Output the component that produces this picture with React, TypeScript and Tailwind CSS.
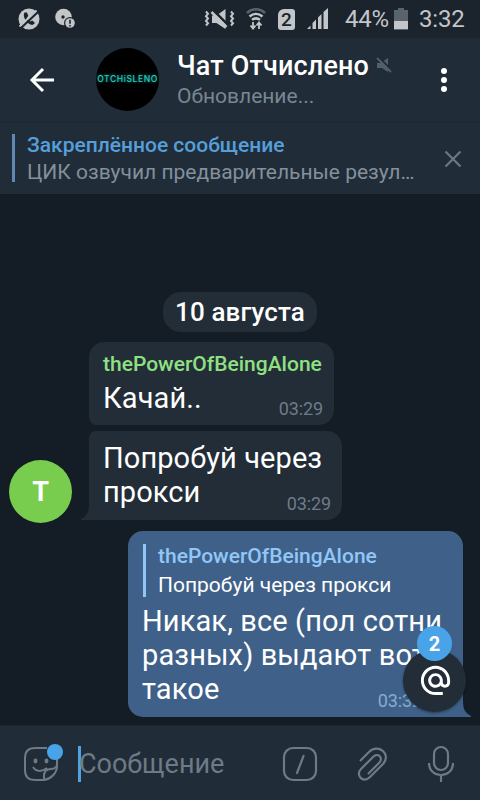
import type { ReactNode } from "react";

// --- STATUS BAR ---

function StatusBar() {
    return (
        <div className="flex h-[38px] shrink-0 items-center bg-[#1b242d] text-[#c3c6c9]">
            <svg className="ml-[18px] h-[22px] w-[22px]" viewBox="0 0 22 22">
                <circle cx="11" cy="11" r="10.5" fill="#c3c6c9" />
                <path d="M6.500 4.500C4 8 8.500 16.500 14.500 17l2.500-2-2.700-2.400-2 .9C10.500 12.500 9.500 11 9 9.500l1.300-1.600L9 4.500z" fill="#1b242d" />
                <path d="M1.500 18.500 18.500 2.500" stroke="#c3c6c9" strokeWidth="2" />
                <path d="M3 20 20 4" stroke="#1b242d" strokeWidth="2" />
            </svg>
            <svg className="ml-[14px] h-[22px] w-[22px]" viewBox="0 0 22 22">
                <circle cx="9.500" cy="9" r="8.300" fill="#c3c6c9" />
                <circle cx="9" cy="9" r="1.700" fill="#1b242d" />
                <circle cx="16" cy="15" r="6" fill="#1b242d" />
                <circle cx="16" cy="15" r="4.800" fill="#c3c6c9" />
                <path d="M16 11.800v4M16 17v1.600" stroke="#1b242d" strokeWidth="1.600" />
            </svg>

            <svg className="ml-[127px] h-[22px] w-[32px]" viewBox="0 0 32 22" fill="none">
                <path d="M9 7.500h4.500L22.500 1v20l-9-6H9z" fill="#c3c6c9" />
                <path d="m10.500 2.500 14 14" stroke="#1b242d" strokeWidth="2.500" />
                <path d="m8.500 4 15 15" stroke="#c3c6c9" strokeWidth="2.500" />
                <path d="m3 3.500 2 2.300-2 2.400 2 2.300-2 2.400 2 2.300-2 2.300M28 3.500l2 2.300-2 2.400 2 2.300-2 2.400 2 2.300-2 2.300" stroke="#c3c6c9" strokeWidth="2" />
            </svg>
            <svg className="ml-[10px] h-[24px] w-[22px]" viewBox="0 0 22 24" fill="none">
                <path d="M2 6c5-5 13-5 18 0" stroke="#59636b" strokeWidth="2.500" />
                <path d="M4.500 9.500c4-3.500 9-3.500 13 0M7 12.700c3-2 5-2 8 0" stroke="#c3c6c9" strokeWidth="2.500" />
                <path d="M8 15v6M5.500 18.500 8 21.500l2.500-3M14 22v-6M11.500 18.500 14 15.500l2.500 3" stroke="#c3c6c9" strokeWidth="1.800" />
            </svg>
            <div className="ml-[11px] flex h-[21px] w-[17px] items-center justify-center rounded-[3px] rounded-tl-[6px] bg-[#c3c6c9] text-[19px] leading-none font-medium text-[#1b242d]">2</div>
            <svg className="ml-[12px] h-[22px] w-[22px]" viewBox="0 0 22 22" fill="#c3c6c9">
                <path d="M0 21l3.500-3.500V21zM5.500 21v-6L9 11.500V21zM11 21V9.500L14.500 6v15zM16.500 21V4L21 0v21z" />
            </svg>
            <span className="ml-[16px] w-[46px] text-[24px] leading-none tracking-[-0.3px]">44%</span>
            <svg className="ml-[3px] h-[22px] w-[14px]" viewBox="0 0 14 22">
                <path d="M4 0h6v2h4v20H0V2h4z" fill="#59636b" />
                <path d="M0 13h14v8H0z" fill="#c3c6c9" />
            </svg>
            <span className="ml-[11px] text-[24px] leading-none tracking-[-0.2px]">3:32</span>
        </div>
    );
}

// --- HEADER ---

function ChatHeader() {
    return (
        <header className="flex h-[84px] shrink-0 items-center bg-[#202c38]">
            <svg className="ml-[29px] h-[26px] w-[26px]" viewBox="0 0 26 26" fill="none" stroke="#fff" strokeWidth="3">
                <path d="M25 13H3M14 2 3 13l11 11" />
            </svg>
            <div className="mt-[-2px] ml-[41px] flex h-[63px] w-[63px] items-center justify-center rounded-full bg-black">
                <span className="font-['Inter'] text-[8.5px] leading-none font-medium tracking-[0.6px] whitespace-nowrap text-[#27c9bf] [text-shadow:0_0_3px_#0b918b]">OTCHiSLENO</span>
            </div>
            <div className="mt-[-1px] ml-[18px] flex-1">
                <div className="flex items-center">
                    <h1 className="text-[27px] leading-[30px] font-medium tracking-[0.15px] whitespace-nowrap text-white">Чат Отчислено</h1>
                    <svg className="ml-[7px] h-[17px] w-[16px]" viewBox="0 0 16 17">
                        <path d="M1 6h3.500L12 1v14l-6-4H1z" fill="#52606c" />
                        <path d="m2.500 0 13 13" stroke="#202c38" strokeWidth="2" />
                        <path d="m1 1 14 14" stroke="#52606c" strokeWidth="1.800" />
                    </svg>
                </div>
                <p className="mt-[2px] text-[21px] leading-[26px] text-[#798793]">Обновление...</p>
            </div>
            <div className="mr-[33px] flex flex-col gap-[3px]">
                <span className="h-[6px] w-[6px] rounded-full bg-white" />
                <span className="h-[6px] w-[6px] rounded-full bg-white" />
                <span className="h-[6px] w-[6px] rounded-full bg-white" />
            </div>
        </header>
    );
}

function PinnedMessage() {
    return (
        <div className="flex h-[72px] shrink-0 items-start border-t border-[#1c2732] bg-[#202c38] pt-[11px] pl-[12px]">
            <div className="h-[48px] w-[3px] bg-[#5d88b2]" />
            <div className="mt-[-1px] ml-[12px] w-[400px] whitespace-nowrap">
                <p className="text-[21px] leading-[24px] font-medium text-[#559fdb]">Закреплённое сообщение</p>
                <p className="mt-[2px] text-[21px] leading-[26px] text-[#84909b]">ЦИК озвучил предварительные резул…</p>
            </div>
            <svg className="mt-[16px] ml-[17px] h-[18px] w-[18px]" viewBox="0 0 18 18" stroke="#6b7782" strokeWidth="2.200">
                <path d="m1.500 1.500 15 15M16.500 1.500l-15 15" />
            </svg>
        </div>
    );
}

// --- MESSAGES ---

function Time({ children, className }: { children: ReactNode; className: string }) {
    return <span className={`absolute text-[18px] leading-[20px] tracking-[-0.1px] ${className}`}>{children}</span>;
}

function MessageList() {
    return (
        <main className="flex flex-1 flex-col bg-[#141d25] pt-[98px]">
            <div className="ml-[163px] flex h-[40px] w-[154px] items-center justify-center rounded-[18px] bg-[#222d38] pt-px text-[26px] font-medium tracking-[0.15px] whitespace-nowrap text-white">
                10 августа
            </div>

            <div className="relative mt-[10px] ml-[89px] h-[83px] w-[245px] rounded-[15px] rounded-bl-[8px] bg-[#222d38] pt-[9px] pl-[14px] whitespace-nowrap">
                <p className="text-[21px] leading-[26px] font-medium text-[#8fe082]">thePowerOfBeingAlone</p>
                <p className="mt-[4px] text-[29px] leading-[34px] tracking-[0.12px] text-white">Качай..</p>
                <Time className="right-[11px] bottom-[6px] text-[#6f7b87]">03:29</Time>
            </div>

            <div className="mt-[6px] flex items-end">
                <div className="mb-[-3px] ml-[9px] flex h-[63px] w-[63px] items-center justify-center rounded-full bg-[#78cc4e] pt-px text-[27px] font-bold text-white">T</div>
                <div className="relative ml-[17px] h-[89px] w-[253px] rounded-[15px] rounded-tl-[7px] rounded-bl-none bg-[#222d38] pt-[10px] pl-[14px] text-[29px] leading-[34px] tracking-[0.08px] whitespace-nowrap text-white">
                    <svg className="absolute bottom-0 left-[-8px] h-[16px] w-[9px]" viewBox="0 0 9 16" fill="#222d38">
                        <path d="M9 0H8c0 8-2 12-8 15v1h9z" />
                    </svg>
                    <p>Попробуй через<br />прокси</p>
                    <Time className="right-[11px] bottom-[6px] text-[#6f7b87]">03:29</Time>
                </div>
            </div>

            <div className="relative mt-[11px] ml-[128px] h-[186px] w-[335px] rounded-[15px] rounded-br-none bg-[#3f6189] pt-[13px] pl-[14px] whitespace-nowrap">
                <svg className="absolute right-[-8px] bottom-0 h-[16px] w-[9px]" viewBox="0 0 9 16" fill="#3f6189">
                    <path d="M0 0h1c0 8 2 12 8 15v1H0z" />
                </svg>
                <div className="flex h-[53px]">
                    <div className="ml-px h-full w-[3px] bg-[#90c7f8]" />
                    <div className="ml-[12px]">
                        <p className="text-[21px] leading-[24px] font-medium text-[#90c7f8]">thePowerOfBeingAlone</p>
                        <p className="mt-[4px] text-[21px] leading-[26px] text-white">Попробуй через прокси</p>
                    </div>
                </div>
                <p className="mt-[7px] text-[29px] leading-[34px] tracking-[0.12px] text-white">
                    Никак, все (пол сотни<br />разных) выдают вот<br />такое
                </p>
                <Time className="right-[41px] bottom-[6px] text-[#85acd2]">03:32</Time>

                {/* Jump to mentions */}
                <div className="absolute top-[118px] left-[275px] flex h-[63px] w-[63px] items-center justify-center rounded-full bg-[#222d38] shadow-[0_1px_3px_#0006]">
                    <svg className="ml-[2px] h-[35px] w-[35px]" viewBox="0 0 24 24" fill="#fff">
                        <path d="M12 1.950c-5.520 0-10 4.480-10 10s4.480 10 10 10h5v-2h-5c-4.340 0-8-3.660-8-8s3.660-8 8-8 8 3.660 8 8v1.430c0 .79-.71 1.570-1.500 1.570s-1.500-.78-1.500-1.570v-1.430c0-2.760-2.240-5-5-5s-5 2.240-5 5 2.240 5 5 5c1.380 0 2.640-.56 3.540-1.470.65.890 1.770 1.470 2.960 1.470 1.970 0 3.500-1.600 3.500-3.570v-1.430c0-5.520-4.480-10-10-10zm0 13c-1.660 0-3-1.340-3-3s1.340-3 3-3 3 1.340 3 3-1.340 3-3 3z" />
                    </svg>
                    <span className="absolute top-[-23px] left-[14px] flex h-[35px] w-[35px] items-center justify-center rounded-full bg-[#48a3e9] pt-px text-[20px] font-bold text-white">2</span>
                </div>
            </div>
        </main>
    );
}

// --- INPUT ---

function MessageInput() {
    return (
        <footer className="flex h-[75px] shrink-0 items-center border-t border-[#1c2833] bg-[#202c38] pt-[2px] text-[#6e7a86]">
            <svg className="ml-[22px] h-[40px] w-[42px]" viewBox="0 0 42 40" fill="none" stroke="currentColor" strokeWidth="2">
                <path d="M25 4H13Q3 4 3 14v12q0 10 10 10h9c7-1 13-7 13-14v-8" />
                <path d="M22 36v-4q0-7 7-7c3 0 5-1 6-4M11 23c3 5 9 5 14 1" />
                <ellipse cx="13.500" cy="17" rx="2" ry="2.400" fill="currentColor" stroke="none" />
                <ellipse cx="24.500" cy="17" rx="2" ry="2.400" fill="currentColor" stroke="none" />
                <circle cx="33" cy="8" r="8" fill="#48a3e9" stroke="none" />
            </svg>
            <div className="ml-[14px] h-[36px] w-[3px] bg-[#4fa3df]" />
            <span className="ml-[-2px] w-[203px] text-[27px] leading-none">Сообщение</span>
            <svg className="h-[36px] w-[36px]" viewBox="0 0 36 36" fill="none" stroke="currentColor" strokeWidth="2.200">
                <rect x="2" y="2" width="32" height="32" rx="9" />
                <path d="m21.500 10-6.500 17" strokeLinecap="round" />
            </svg>
            <svg className="ml-[39px] h-[36px] w-[32px]" viewBox="0 0 32 36" fill="none" stroke="currentColor" strokeWidth="2.200">
                <path d="M3 15 12 6C21-3 35 8 26 18L13 31C6 38-2 29 4 23L16 11c5-5 11 1 6 6L11 28" />
            </svg>
            <svg className="ml-[38px] h-[38px] w-[28px]" viewBox="0 0 28 38" fill="none" stroke="currentColor" strokeWidth="2.200">
                <rect x="7" y="2" width="14" height="23" rx="7" />
                <path d="M2 18c0 16 24 16 24 0M14 30v7" />
            </svg>
        </footer>
    );
}

export default function App() {
    return (
        <div className="flex h-[800px] w-[480px] flex-col overflow-hidden bg-[#141d25] font-['Roboto',sans-serif]">
            <StatusBar />
            <ChatHeader />
            <PinnedMessage />
            <MessageList />
            <MessageInput />
        </div>
    );
}
